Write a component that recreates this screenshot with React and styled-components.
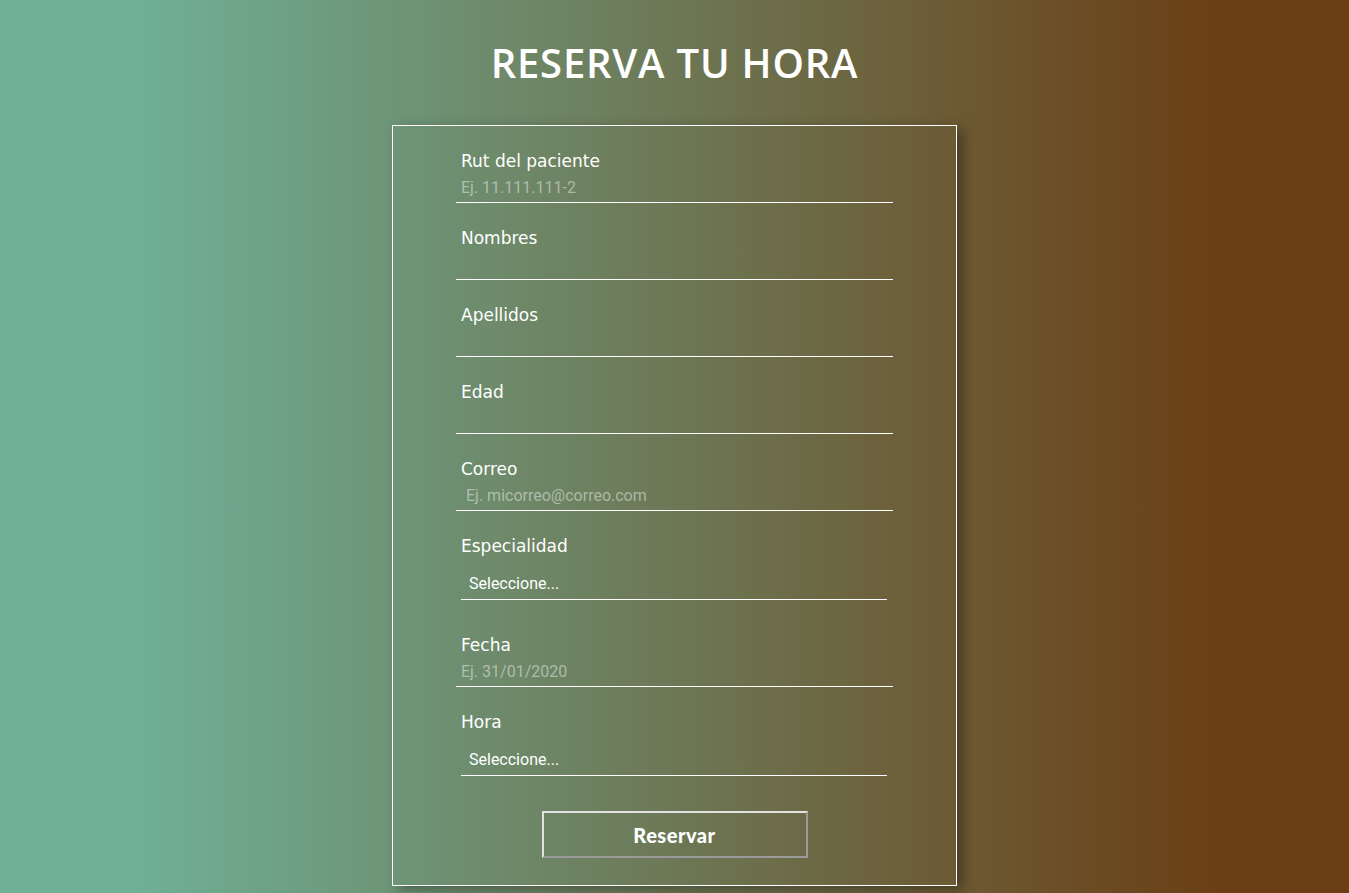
import React from 'react';
import styled, { createGlobalStyle } from 'styled-components';

const Global = createGlobalStyle`
  body{
    margin:0;
    font-family:"DejaVu Sans", sans-serif;
  }
`;

const fields = [
  { label: 'Rut del paciente', placeholder: 'Ej. 11.111.111-2' },
  { label: 'Nombres' },
  { label: 'Apellidos' },
  { label: 'Edad' },
  { label: 'Correo', placeholder: 'Ej. micorreo@correo.com', indent: true },
  { label: 'Especialidad', select: true },
  { label: 'Fecha', placeholder: 'Ej. 31/01/2020' },
  { label: 'Hora', select: true },
];

const App = () => {
  return (
    <Page>
      <Global />
      <Title>RESERVA TU HORA</Title>
      <Card>
        {fields.map((f) => (
          <Field key={f.label} $select={f.select}>
            <Label>{f.label}</Label>
            {f.select ? (
              <Select defaultValue="">
                <option value="">Seleccione...</option>
              </Select>
            ) : (
              <Input placeholder={f.placeholder || ''} $indent={f.indent} />
            )}
          </Field>
        ))}
        <Actions>
          <Button>Reservar</Button>
        </Actions>
      </Card>
    </Page>
  );
}

export default App;

const Page = styled.div`
  min-height:100vh;
  box-sizing:border-box;
  background:linear-gradient(to right, #6fb096 10%, #6b3f15 90%);
  display:flex;
  flex-direction:column;
  align-items:center;
  padding:39px 0 8px;
`;

const Title = styled.h1`
  margin:0 0 38px;
  color:#fff;
  font-family:"Open Sans", sans-serif;
  font-size:40px;
  line-height:48px;
  font-weight:600;
  letter-spacing:0.8px;
`;

const Card = styled.div`
  width:565px;
  box-sizing:border-box;
  border:1px solid #fff;
  padding:23px 63px 27px;
  box-shadow:6px 4px 12px rgba(0,0,0,0.35);
  display:flex;
  flex-direction:column;
`;

const Field = styled.div`
  display:flex;
  flex-direction:column;
  margin-bottom:${(p) => (p.$select ? '33px' : '23px')};
`;

const Label = styled.label`
  color:#fff;
  font-size:17px;
  line-height:24px;
  padding-left:5px;
`;

const Input = styled.input`
  height:30px;
  box-sizing:border-box;
  background:transparent;
  border:none;
  border-bottom:1px solid #fff;
  outline:none;
  color:#fff;
  font-family:Roboto, sans-serif;
  font-size:16px;
  padding:0 0 0 ${(p) => (p.$indent ? '10px' : '5px')};
  &::placeholder{
    color:rgba(255,255,255,0.45);
  }
`;

const Select = styled.select`
  margin:8px 6px 0 5px;
  height:34px;
  box-sizing:border-box;
  appearance:none;
  background:transparent;
  border:none;
  border-bottom:1px solid #fff;
  outline:none;
  color:#fff;
  font-family:Roboto, sans-serif;
  font-size:16px;
  padding:2px 8px 0;
  option{
    color:#000;
  }
`;

const Actions = styled.div`
  display:flex;
  justify-content:center;
  margin-top:2px;
`;

const Button = styled.button`
  width:266px;
  height:47px;
  background:transparent;
  border:2px solid;
  border-color:#e2e2e2 #9a9a9a #9a9a9a #e2e2e2;
  color:#fff;
  font-family:Lato, sans-serif;
  font-weight:900;
  font-size:20px;
  letter-spacing:0.5px;
  cursor:pointer;
`;
